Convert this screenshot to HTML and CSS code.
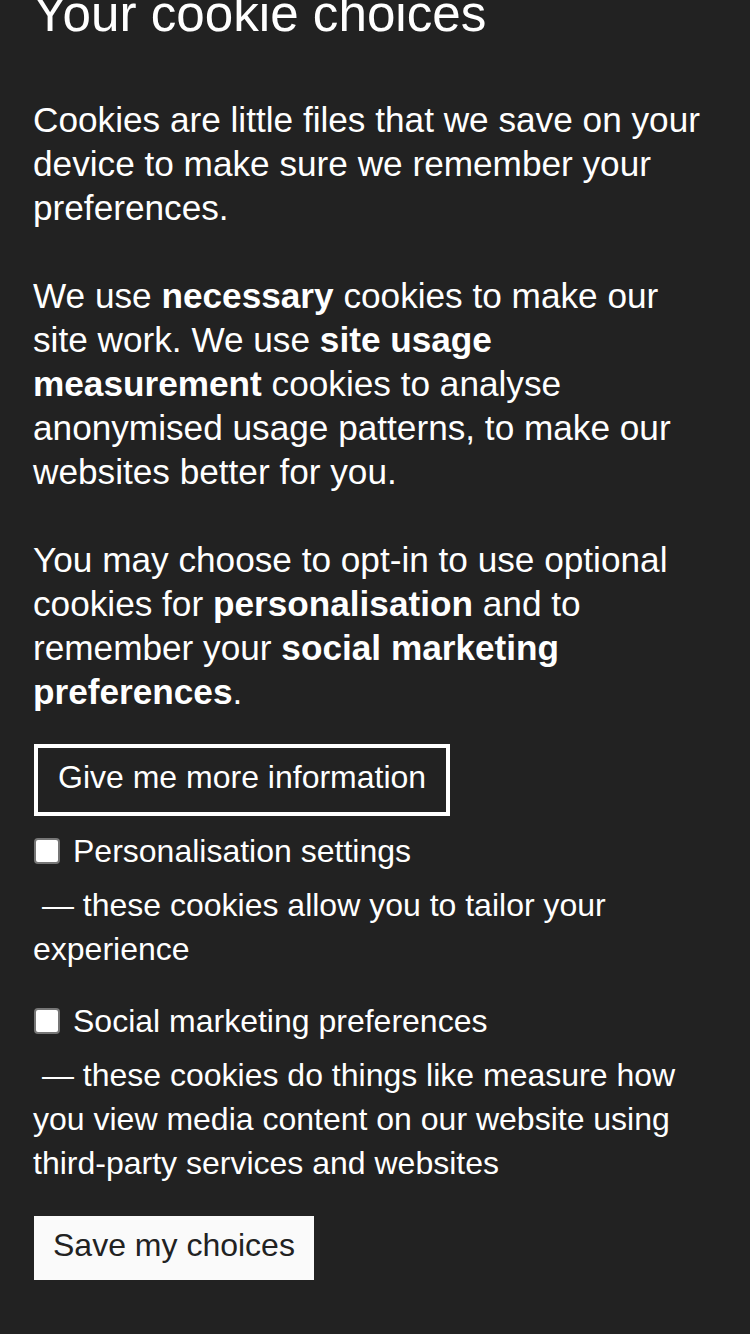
FILE: index.html
```html
<!DOCTYPE html>
<html lang="en">
<head>
    <meta charset="utf-8" />
    <title>Your cookie choices</title>
    <link rel="stylesheet" href="styles.css">
</head>
<body>
    <div class="banner">
        <h1 class="title">Your cookie choices</h1>
        <p class="txt">Cookies are little files that we save on your device to make sure we remember your preferences.</p>
        <p class="txt">We use <b>necessary</b> cookies to make our site work. We use <b>site usage measurement</b> cookies to analyse anonymised usage patterns, to make our websites better for you.</p>
        <p class="txt last">You may choose to opt-in to use optional cookies for <b>personalisation</b> and to remember your <b>social marketing preferences</b>.</p>

        <form action="#" method="get">
            <button type="button" class="btn-more">Give me more information</button>

            <div class="opt">
                <label class="opt-lab" for="perso">
                    <input class="chk" type="checkbox" id="perso" name="perso" />
                    <span>Personalisation settings</span>
                </label>
                <p class="opt-desc">&nbsp;— these cookies allow you to tailor your experience</p>
            </div>

            <div class="opt">
                <label class="opt-lab" for="social">
                    <input class="chk" type="checkbox" id="social" name="social" />
                    <span>Social marketing preferences</span>
                </label>
                <p class="opt-desc">&nbsp;— these cookies do things like measure how you view media content on our website using third-party services and websites</p>
            </div>

            <button type="submit" class="btn-save">Save my choices</button>
        </form>
    </div>
</body>
</html>
```

FILE: styles.css
```css
* {
    font-family: "Liberation Sans", Arial, sans-serif;
    box-sizing: border-box;
}

body {
    margin: 0;
    background: #222222;
    color: #ffffff;
}

.banner {
    padding: 0 30px 60px 33px;
}

.title {
    margin: -15px 0 56px 0;
    font-size: 51.2px;
    font-weight: normal;
    line-height: 57px;
}

.txt {
    margin: 0 0 44px 0;
    font-size: 35.2px;
    line-height: 44px;
}

.txt b {
    font-weight: bold;
}

.txt.last {
    margin-bottom: 30px;
}

.btn-more {
    display: block;
    margin: 0 0 13px 1px;
    padding: 9px 20px 15px 20px;
    border: 4px solid #ffffff;
    background: transparent;
    color: #ffffff;
    font-size: 32px;
    line-height: 40px;
    cursor: pointer;
}

.opt {
    margin-bottom: 28px;
}

.opt-lab {
    display: flex;
    align-items: center;
    gap: 13px;
    font-size: 32px;
    line-height: 44px;
}

.chk {
    appearance: none;
    -webkit-appearance: none;
    width: 26px;
    height: 26px;
    margin: 0 0 0 1px;
    border: 2px solid #767676;
    border-radius: 4px;
    background: #ffffff;
}

.opt-desc {
    margin: 10px 0 0 0;
    font-size: 32px;
    line-height: 44px;
}

.btn-save {
    display: block;
    margin: 31px 0 0 1px;
    padding: 9px 19px 15px 19px;
    border: none;
    background: #fafafa;
    color: #222222;
    font-size: 32px;
    line-height: 40px;
    cursor: pointer;
}
```
